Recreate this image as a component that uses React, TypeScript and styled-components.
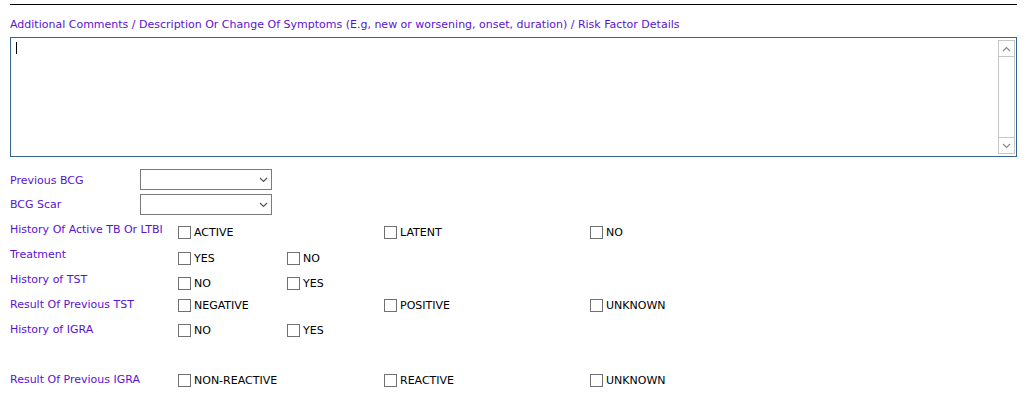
import React from "react";
import styled, { createGlobalStyle } from "styled-components";

const GlobalStyle = createGlobalStyle`
  html, body {
    margin: 0;
    padding: 0;
    background: #ffffff;
  }
  body {
    font-family: "DejaVu Sans", Verdana, sans-serif;
    font-size: 11px;
  }
`;

const Page = styled.div`
  width: 1007px;
  margin-left: 10px;
  padding-top: 4px;
`;

const Rule = styled.hr`
  margin: 0;
  border: 0;
  height: 1px;
  background: #000000;
`;

const FieldLabel = styled.div<{ $top?: number }>`
  color: #5a12d2;
  line-height: 15px;
  padding-top: ${(p) => p.$top ?? 0}px;
  white-space: nowrap;
`;

const CommentsCaption = styled(FieldLabel)`
  margin-top: 12px;
`;

const CommentsBox = styled.div`
  margin-top: 5px;
  height: 120px;
  box-sizing: border-box;
  border: 1px solid #33658f;
  display: flex;
  padding: 1px 1px 1px 5px;
`;

const CommentsInput = styled.div`
  flex: 1;
  padding-top: 3px;
`;

const Caret = styled.span`
  display: block;
  width: 1px;
  height: 12px;
  background: #000000;
`;

const ScrollTrack = styled.div`
  width: 17px;
  box-sizing: border-box;
  border: 1px solid #c6c6c6;
  display: flex;
  flex-direction: column;
  justify-content: space-between;
  margin-top: 1px;
  margin-bottom: 1px;
`;

const ScrollButton = styled.div<{ $down?: boolean }>`
  height: 15px;
  display: flex;
  align-items: center;
  justify-content: center;
  border-${(p) => (p.$down ? "top" : "bottom")}: 1px solid #c6c6c6;
`;

const Form = styled.div`
  margin-top: 12px;
  display: flex;
  flex-direction: column;
`;

const Row = styled.div<{ $height?: number }>`
  display: flex;
  align-items: flex-start;
  height: ${(p) => p.$height ?? 25}px;
`;

const LabelCell = styled.div`
  width: 130px;
  flex: none;
`;

const WideLabelCell = styled.div`
  width: 168px;
  flex: none;
`;

const Select = styled.div`
  width: 132px;
  height: 21px;
  box-sizing: border-box;
  border: 1px solid #7a7a7a;
  display: flex;
  align-items: center;
  justify-content: flex-end;
  padding-right: 3px;
`;

const Options = styled.div<{ $top: number }>`
  display: flex;
  align-items: flex-start;
  padding-top: ${(p) => p.$top}px;
`;

const Option = styled.label<{ $width: number }>`
  width: ${(p) => p.$width}px;
  height: 13px;
  display: flex;
  align-items: center;
  color: #000000;
  line-height: 13px;
`;

const Box = styled.span`
  width: 13px;
  height: 13px;
  box-sizing: border-box;
  border: 1px solid #707070;
  background: #ffffff;
  margin-right: 3px;
  flex: none;
`;

const Chevron = ({ down, color = "#8a8a8a" }: { down?: boolean; color?: string }) => (
  <svg width="9" height="6" viewBox="0 0 9 6">
    <polyline
      points={down ? "1,1 4.5,4.5 8,1" : "1,5 4.5,1.5 8,5"}
      fill="none"
      stroke={color}
      strokeWidth="1.2"
    />
  </svg>
);

const CheckGroup = ({ top, width, items }: { top: number; width: number; items: string[] }) => (
  <Options $top={top}>
    {items.map((t) => (
      <Option key={t} $width={width}>
        <Box />
        {t}
      </Option>
    ))}
  </Options>
);

const CheckRow = ({
  label,
  labelTop,
  boxTop,
  width,
  items,
  height,
}: {
  label: string;
  labelTop: number;
  boxTop: number;
  width: number;
  items: string[];
  height?: number;
}) => (
  <Row $height={height}>
    <WideLabelCell>
      <FieldLabel $top={labelTop}>{label}</FieldLabel>
    </WideLabelCell>
    <CheckGroup top={boxTop} width={width} items={items} />
  </Row>
);

export default function App() {
  return (
    <>
      <GlobalStyle />
      <Page>
        <Rule />
        <CommentsCaption>
          Additional Comments / Description Or Change Of Symptoms (E.g, new or worsening, onset, duration) / Risk Factor Details
        </CommentsCaption>
        <CommentsBox>
          <CommentsInput>
            <Caret />
          </CommentsInput>
          <ScrollTrack>
            <ScrollButton>
              <Chevron />
            </ScrollButton>
            <ScrollButton $down>
              <Chevron down />
            </ScrollButton>
          </ScrollTrack>
        </CommentsBox>
        <Form>
          <Row>
            <LabelCell>
              <FieldLabel $top={4}>Previous BCG</FieldLabel>
            </LabelCell>
            <Select>
              <Chevron down color="#555555" />
            </Select>
          </Row>
          <Row>
            <LabelCell>
              <FieldLabel $top={3}>BCG Scar</FieldLabel>
            </LabelCell>
            <Select>
              <Chevron down color="#555555" />
            </Select>
          </Row>
          <CheckRow label="History Of Active TB Or LTBI" labelTop={3} boxTop={7} width={206} items={["ACTIVE", "LATENT", "NO"]} />
          <CheckRow label="Treatment" labelTop={3} boxTop={8} width={109} items={["YES", "NO"]} />
          <CheckRow label="History of TST" labelTop={3} boxTop={8} width={109} items={["NO", "YES"]} />
          <CheckRow label="Result Of Previous TST" labelTop={3} boxTop={5} width={206} items={["NEGATIVE", "POSITIVE", "UNKNOWN"]} />
          <CheckRow label="History of IGRA" labelTop={3} boxTop={5} width={109} items={["NO", "YES"]} height={50} />
          <CheckRow label="Result Of Previous IGRA" labelTop={3} boxTop={5} width={206} items={["NON-REACTIVE", "REACTIVE", "UNKNOWN"]} />
        </Form>
      </Page>
    </>
  );
}
